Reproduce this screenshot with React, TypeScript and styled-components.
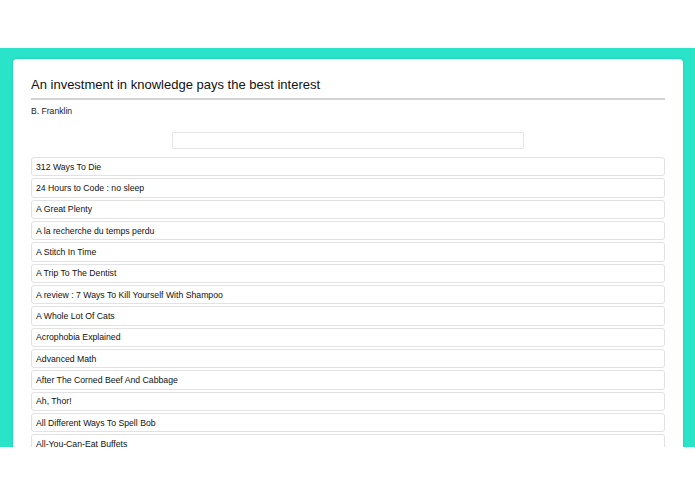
import React from "react";
import styled, { createGlobalStyle } from "styled-components";

const Global = createGlobalStyle`
  html, body { margin: 0; padding: 0; background: #fff; }
  body { font-family: "Liberation Sans", Arial, Helvetica, sans-serif; color: #222; }
`;

const Band = styled.div`
  margin-top: 48px;
  height: 399px;
  background: #29e4c8;
  overflow: hidden;
  padding: 11px 12px 0 13px;
  box-sizing: border-box;
`;

const Card = styled.div`
  background: #fff;
  border-radius: 4px;
  box-shadow: 0 0 3px rgba(0, 0, 0, 0.12);
  padding: 15px 18px 20px 18px;
  min-height: 500px;
  box-sizing: border-box;
`;

const Title = styled.h1`
  margin: 0;
  font-size: 13px;
  font-weight: normal;
  line-height: 21px;
  color: #111;
  padding-bottom: 3px;
  border-bottom: 2px solid #d4d4d4;
`;

const Author = styled.p`
  margin: 5px 0 0 0;
  font-size: 8.6px;
  line-height: 12px;
  color: #222;
`;

const SearchRow = styled.div`
  display: flex;
  justify-content: center;
  margin-top: 15px;
`;

const Search = styled.input`
  width: 352px;
  height: 17px;
  box-sizing: border-box;
  border: 1px solid #e6e6e6;
  border-radius: 1px;
  outline: none;
  background: #fff;
  font-size: 9px;
  padding: 0 4px;
`;

const List = styled.ul`
  list-style: none;
  margin: 8px 0 0 0;
  padding: 0;
  display: flex;
  flex-direction: column;
  gap: 2px;
`;

const Item = styled.li`
  height: 19.33px;
  box-sizing: border-box;
  border: 1px solid #e2e2e2;
  border-radius: 3px;
  display: flex;
  align-items: center;
  padding-left: 4px;
  font-size: 8.7px;
  color: #111;
`;

const titles = [
  "312 Ways To Die",
  "24 Hours to Code : no sleep",
  "A Great Plenty",
  "A la recherche du temps perdu",
  "A Stitch In Time",
  "A Trip To The Dentist",
  "A review : 7 Ways To Kill Yourself With Shampoo",
  "A Whole Lot Of Cats",
  "Acrophobia Explained",
  "Advanced Math",
  "After The Corned Beef And Cabbage",
  "Ah, Thor!",
  "All Different Ways To Spell Bob",
  "All-You-Can-Eat Buffets",
];

export default function App() {
  return (
    <>
      <Global />
      <Band>
        <Card>
          <Title>An investment in knowledge pays the best interest</Title>
          <Author>B. Franklin</Author>
          <SearchRow>
            <Search type="text" />
          </SearchRow>
          <List>
            {titles.map((t) => (
              <Item key={t}>{t}</Item>
            ))}
          </List>
        </Card>
      </Band>
    </>
  );
}
